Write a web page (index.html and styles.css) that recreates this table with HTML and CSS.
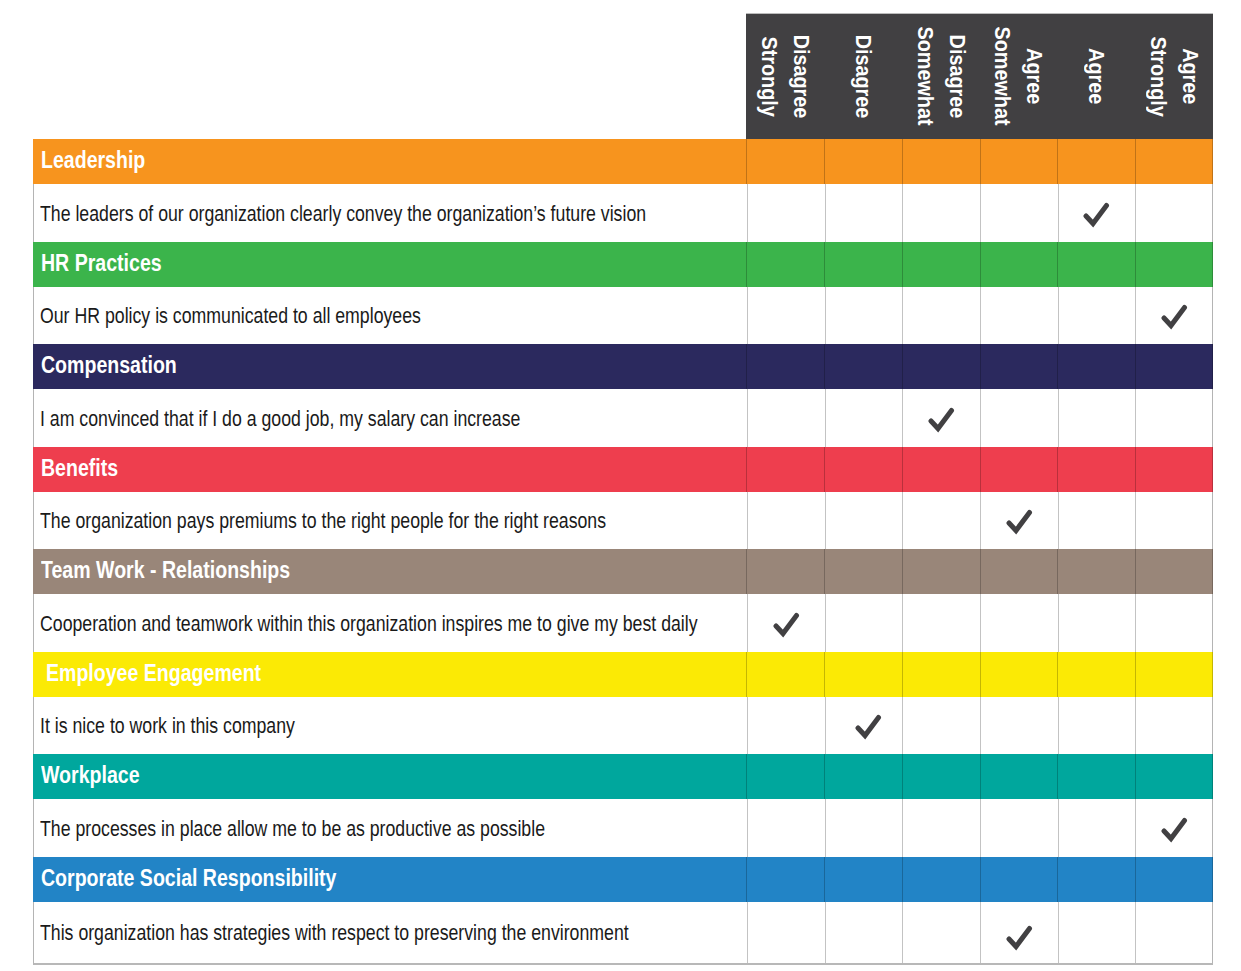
FILE: index.html
```html
<!DOCTYPE html>
<html>
<head>
<meta charset="utf-8">
<link rel="stylesheet" href="styles.css">
</head>
<body>
<div class="survey">
  <div class="head">
    <div class="head-blank"></div>
    <div class="head-cols">
      <div class="hcol"><span>Disagree<br>Strongly</span></div>
      <div class="hcol"><span>Disagree</span></div>
      <div class="hcol"><span>Disagree<br>Somewhat</span></div>
      <div class="hcol"><span>Agree<br>Somewhat</span></div>
      <div class="hcol"><span>Agree</span></div>
      <div class="hcol"><span>Agree<br>Strongly</span></div>
    </div>
  </div>

  <div class="row cat orange"><div class="label"><span>Leadership</span></div><div class="c"></div><div class="c"></div><div class="c"></div><div class="c"></div><div class="c"></div><div class="c"></div></div>
  <div class="row item"><div class="label"><span>The leaders of our organization clearly convey the organization’s future vision</span></div><div class="c"></div><div class="c"></div><div class="c"></div><div class="c"></div><div class="c"><svg class="tick" viewBox="0 0 27 27"><polyline points="3,15 10,22.5 23.5,4.5"/></svg></div><div class="c"></div></div>

  <div class="row cat green"><div class="label"><span>HR Practices</span></div><div class="c"></div><div class="c"></div><div class="c"></div><div class="c"></div><div class="c"></div><div class="c"></div></div>
  <div class="row item"><div class="label"><span>Our HR policy is communicated to all employees</span></div><div class="c"></div><div class="c"></div><div class="c"></div><div class="c"></div><div class="c"></div><div class="c"><svg class="tick" viewBox="0 0 27 27"><polyline points="3,15 10,22.5 23.5,4.5"/></svg></div></div>

  <div class="row cat navy"><div class="label"><span>Compensation</span></div><div class="c"></div><div class="c"></div><div class="c"></div><div class="c"></div><div class="c"></div><div class="c"></div></div>
  <div class="row item"><div class="label"><span>I am convinced that if I do a good job, my salary can increase</span></div><div class="c"></div><div class="c"></div><div class="c"><svg class="tick" viewBox="0 0 27 27"><polyline points="3,15 10,22.5 23.5,4.5"/></svg></div><div class="c"></div><div class="c"></div><div class="c"></div></div>

  <div class="row cat red"><div class="label"><span>Benefits</span></div><div class="c"></div><div class="c"></div><div class="c"></div><div class="c"></div><div class="c"></div><div class="c"></div></div>
  <div class="row item"><div class="label"><span>The organization pays premiums to the right people for the right reasons</span></div><div class="c"></div><div class="c"></div><div class="c"></div><div class="c"><svg class="tick" viewBox="0 0 27 27"><polyline points="3,15 10,22.5 23.5,4.5"/></svg></div><div class="c"></div><div class="c"></div></div>

  <div class="row cat taupe"><div class="label"><span>Team Work - Relationships</span></div><div class="c"></div><div class="c"></div><div class="c"></div><div class="c"></div><div class="c"></div><div class="c"></div></div>
  <div class="row item"><div class="label"><span>Cooperation and teamwork within this organization inspires me to give my best daily</span></div><div class="c"><svg class="tick" viewBox="0 0 27 27"><polyline points="3,15 10,22.5 23.5,4.5"/></svg></div><div class="c"></div><div class="c"></div><div class="c"></div><div class="c"></div><div class="c"></div></div>

  <div class="row cat yellow"><div class="label label-indent"><span>Employee Engagement</span></div><div class="c"></div><div class="c"></div><div class="c"></div><div class="c"></div><div class="c"></div><div class="c"></div></div>
  <div class="row item"><div class="label"><span>It is nice to work in this company</span></div><div class="c"></div><div class="c"><svg class="tick tick-right" viewBox="0 0 27 27"><polyline points="3,15 10,22.5 23.5,4.5"/></svg></div><div class="c"></div><div class="c"></div><div class="c"></div><div class="c"></div></div>

  <div class="row cat teal"><div class="label"><span>Workplace</span></div><div class="c"></div><div class="c"></div><div class="c"></div><div class="c"></div><div class="c"></div><div class="c"></div></div>
  <div class="row item"><div class="label"><span>The processes in place allow me to be as productive as possible</span></div><div class="c"></div><div class="c"></div><div class="c"></div><div class="c"></div><div class="c"></div><div class="c"><svg class="tick" viewBox="0 0 27 27"><polyline points="3,15 10,22.5 23.5,4.5"/></svg></div></div>

  <div class="row cat blue"><div class="label"><span>Corporate Social Responsibility</span></div><div class="c"></div><div class="c"></div><div class="c"></div><div class="c"></div><div class="c"></div><div class="c"></div></div>
  <div class="row item last"><div class="label"><span>This organization has strategies with respect to preserving the environment</span></div><div class="c"></div><div class="c"></div><div class="c"></div><div class="c"><svg class="tick tick-low" viewBox="0 0 27 27"><polyline points="3,15 10,22.5 23.5,4.5"/></svg></div><div class="c"></div><div class="c"></div></div>
</div>
</body>
</html>
```

FILE: styles.css
```css
* { box-sizing: border-box; }

html, body {
  margin: 0;
  padding: 0;
  background: #ffffff;
}

body {
  font-family: "Liberation Sans", Arial, sans-serif;
  color: #1a1a1a;
}

.survey {
  width: 1180px;
  margin: 13px 0 0 33px;
  display: flex;
  flex-direction: column;
}

.head {
  display: grid;
  grid-template-columns: 713px 1fr;
  height: 126px;
}

.head-cols {
  display: grid;
  grid-template-columns: repeat(6, 1fr);
  background: #414042;
  border-top: 1px solid #bcbcbc;
}

.hcol {
  display: flex;
  align-items: center;
  justify-content: center;
  color: #ffffff;
  font-weight: bold;
  font-size: 22px;
  line-height: 32px;
}

.hcol span {
  display: inline-block;
  writing-mode: vertical-rl;
  text-align: center;
  white-space: nowrap;
  transform: scaleY(0.9);
}

.row {
  display: grid;
  grid-template-columns: 713px repeat(6, 1fr);
}

.row .label {
  display: flex;
  align-items: center;
  white-space: nowrap;
  overflow: visible;
}

.row .label span {
  display: inline-block;
  transform-origin: left center;
}

.row .c {
  border-left: 1px solid #c3c3c3;
  display: flex;
  align-items: center;
  justify-content: center;
}

.row .c:last-child {
  border-right: 1px solid #b4b4b4;
}

.cat {
  height: 45px;
  color: #ffffff;
}

.cat .c {
  border-left-color: rgba(0, 0, 0, 0.22);
}

.cat .c:last-child {
  border-right-color: rgba(0, 0, 0, 0.22);
}

.cat .label {
  padding-left: 8px;
  padding-bottom: 2px;
  font-weight: bold;
  font-size: 23px;
}

.cat .label span {
  transform: scaleX(0.85);
}

.cat .label-indent {
  padding-left: 13px;
}

.item {
  height: 57.5px;
  border-left: 1px solid #b4b4b4;
}

.item .label {
  padding-left: 6px;
  padding-top: 2px;
  font-size: 22px;
  color: #1a1a1a;
}

.item .label span {
  transform: scaleX(0.805);
}

.item.last {
  height: 63px;
  border-bottom: 2px solid #b8b8b8;
}

.orange { background: #f7941e; }
.green  { background: #3bb44b; }
.navy   { background: #2b295e; }
.red    { background: #ee3e4e; }
.taupe  { background: #998679; }
.yellow { background: #fbea05; }
.teal   { background: #00a79d; }
.blue   { background: #2284c6; }

.tick {
  width: 27px;
  height: 27px;
  margin-top: 3px;
}

.tick polyline {
  fill: none;
  stroke: #414042;
  stroke-width: 5;
  stroke-linecap: round;
  stroke-linejoin: miter;
}

.tick-right {
  margin-left: 9px;
}

.tick-low {
  margin-top: 10px;
}
```
